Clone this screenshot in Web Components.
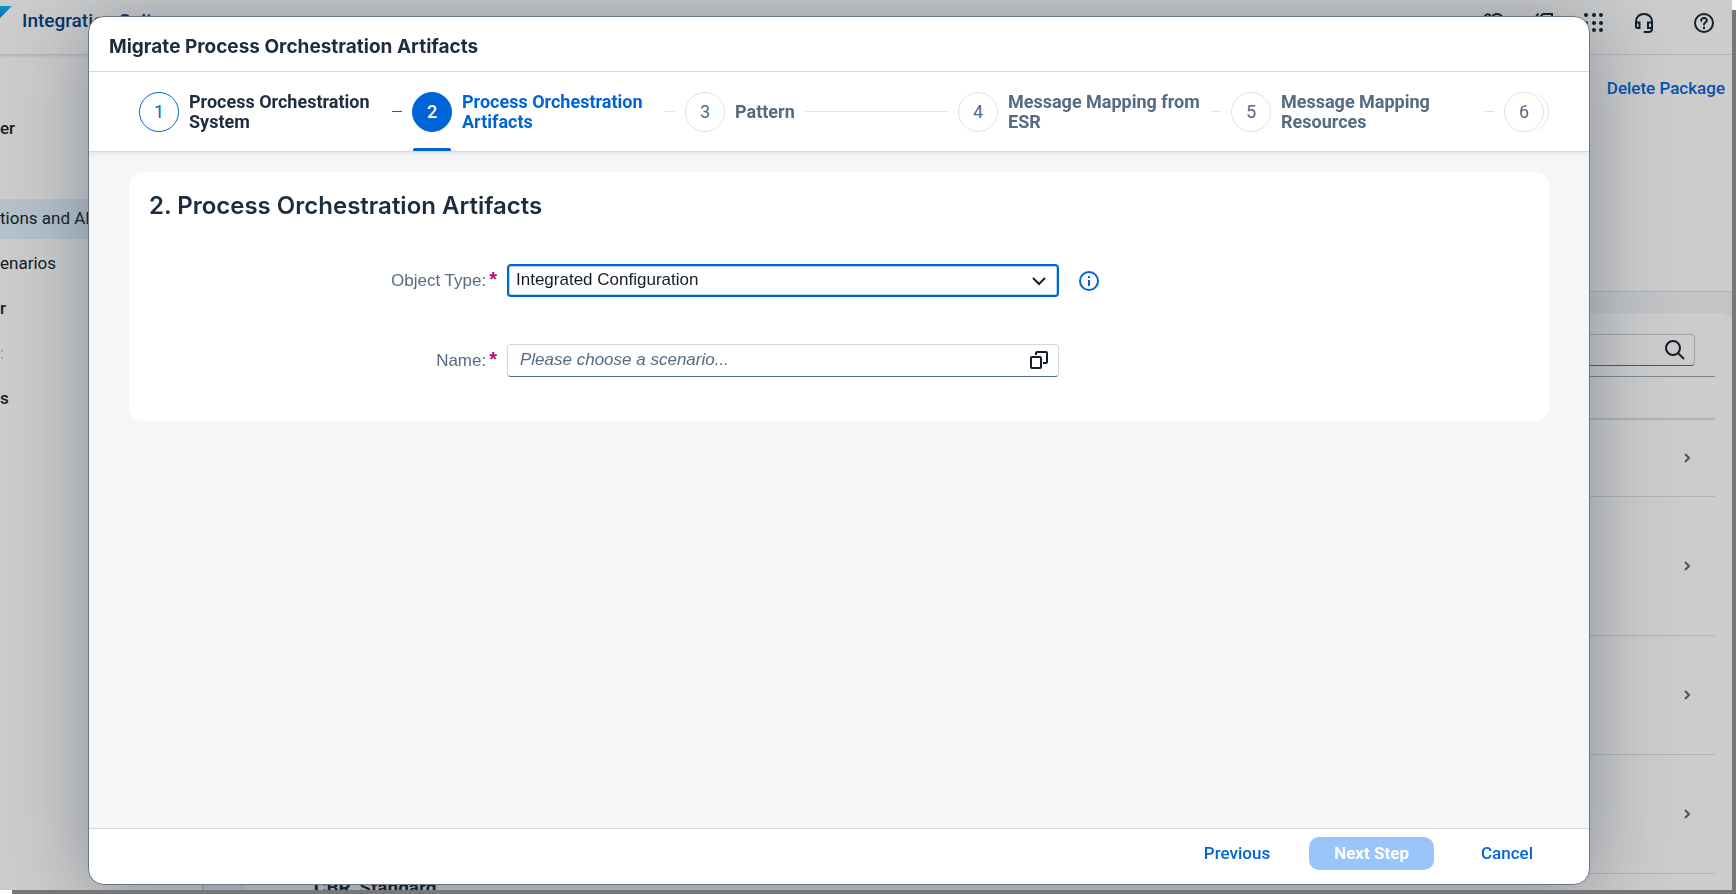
<!DOCTYPE html>
<html lang="en">
<head>
<meta charset="utf-8">
<title>Migrate Process Orchestration Artifacts</title>
<style>
  html, body { margin: 0; height: 100%; }
  body {
    box-sizing: border-box;
    padding: 0 4px 4px 0;
    overflow: hidden;
    background: #fff;
    font: 17px/20px Roboto, "Liberation Sans", sans-serif;
    color: #131e29;
    --accent: #0064d9;
    --ink: #1d2d3e;
    --muted: #556b82;
    --rule: #d9d9d9;
    --heading-font: Inter, "Liberation Sans", sans-serif;
    --field-font: "Liberation Sans", Arial, sans-serif;
  }
</style>
</head>
<body>
<app-frame>
  <shell-header slot="header">Integration Suite</shell-header>
  <side-nav slot="nav"></side-nav>
  <package-page slot="page"></package-page>
  <modal-dialog slot="dialog" label="Migrate Process Orchestration Artifacts">
    <wizard-steps slot="steps">
      <wizard-step number="1" state="done">Process Orchestration<br>System</wizard-step>
      <wizard-step number="2" state="current">Process Orchestration<br>Artifacts</wizard-step>
      <wizard-step number="3" short>Pattern</wizard-step>
      <wizard-step number="4">Message Mapping from<br>ESR</wizard-step>
      <wizard-step number="5">Message Mapping<br>Resources</wizard-step>
      <wizard-step number="6" stacked></wizard-step>
    </wizard-steps>
    <content-card heading="2. Process Orchestration Artifacts">
      <object-type-field></object-type-field>
      <name-field></name-field>
    </content-card>
    <action-button slot="actions">Previous</action-button>
    <action-button slot="actions" primary disabled>Next Step</action-button>
    <action-button slot="actions" last>Cancel</action-button>
  </modal-dialog>
</app-frame>

<script>
  const define = (name, html, setup) => {
    const template = document.createElement('template');
    template.innerHTML = html;
    customElements.define(name, class extends HTMLElement {
      constructor() {
        super();
        this.attachShadow({ mode: 'open' }).append(template.content.cloneNode(true));
      }
      connectedCallback() {
        if (setup) setup(this, this.shadowRoot);
      }
    });
  };

  define('app-frame', `
    <style>
      :host {
        position: relative; box-sizing: border-box; height: 100%;
        display: grid; grid-template: auto 1fr / 204px 1fr;
        background: #ccc; overflow: clip;
      }
      .shade {
        position: fixed; inset: 0 4px 4px 0; pointer-events: none;
        box-shadow: 6px 8px 6px 4px #777;
        clip-path: inset(10px -4px -4px 12px);
      }
      ::slotted([slot=header]) { grid-column: 1 / -1; }
      ::slotted([slot=page]) { min-height: 0; }
      ::slotted([slot=dialog]) { position: absolute; inset: 16px 142px 5px 88px; }
    </style>
    <div class="shade"></div>
    <slot name="header"></slot>
    <slot name="nav"></slot>
    <slot name="page"></slot>
    <slot name="dialog"></slot>
  `);

  define('shell-header', `
    <style>
      :host {
        display: flex; align-items: center; height: 55px; box-sizing: border-box;
        padding: 0 16px 12px 0; gap: 10px; color: #073469;
        border-bottom: 1px solid #b3b5b7; box-shadow: 0 2px 2px #bdbebf;
        font-size: 19px; font-weight: 500; line-height: 24px;
      }
      .logo { width: 12px; height: 32px; }
      .title { flex: 1; }
      nav { display: flex; gap: 26px; padding-top: 4px; }
      button { border: 0; padding: 0; background: none; width: 24px; height: 24px; color: #131e29; }
      button:last-child { margin-left: 10px; }
      svg { display: block; fill: none; stroke: currentColor; stroke-width: 2; stroke-linecap: round; }
    </style>
    <svg class="logo" viewBox="0 0 12 32" aria-hidden="true">
      <defs><linearGradient id="g" x2="0" y2="1"><stop stop-color="#0d96c6"/><stop offset="1" stop-color="#0a66ab"/></linearGradient></defs>
      <path d="M0 1h12L0 13z" fill="url(#g)" stroke="none"/>
    </svg>
    <span class="title"><slot></slot></span>
    <nav aria-label="Tools">
      <button aria-label="Feedback"><svg width="24" height="24"><path d="M3 5c1-2 3-2 5-1M10 6c2-4 8-4 10 0M5 10v9h13"/></svg></button>
      <button aria-label="Notes"><svg width="24" height="24"><path d="M3 7 6 3M9 5l2-2h9v8M8 9v11h9"/></svg></button>
      <button aria-label="Products"><svg width="24" height="24" style="fill:currentColor;stroke:none"><circle cx="4" cy="4" r="2"/><circle cx="12" cy="4" r="2"/><circle cx="19" cy="4" r="2"/><circle cx="4" cy="12" r="2"/><circle cx="12" cy="12" r="2"/><circle cx="19" cy="12" r="2"/><circle cx="4" cy="19" r="2"/><circle cx="12" cy="19" r="2"/><circle cx="19" cy="19" r="2"/></svg></button>
      <button aria-label="Support"><svg width="24" height="24"><path d="M4 15V10.500C4 6 7.500 3 12 3s8 3 8 7.500V17.500Q20 21 16.500 21H12.500M4 11.500H7.500V17H5.500Q4 17 4 15.500zM20 11.500H16V17H20"/></svg></button>
      <button aria-label="Help"><svg width="24" height="24"><circle cx="12" cy="12" r="9"/><path d="M9.200 9.800c0-4 5.800-3.600 5.600-.3C14.700 11.500 12 11.500 12 13.500"/><path d="M12 16.800v.2" stroke-width="2.400"/></svg></button>
    </nav>
  `);

  define('side-nav', `
    <style>
      :host { display: block; border-right: 2px solid #a9adb0; overflow: hidden; }
      ul { list-style: none; margin: 0; padding: 54px 0 0; display: grid; gap: 5px; }
      a { display: flex; align-items: center; box-sizing: border-box; height: 40px; padding-bottom: 2px; color: #131e29; text-decoration: none; }
      .gap { visibility: hidden; }
      .group { font-weight: 500; }
      .faint { color: #93979b; }
      .current { background: #b5c1cb; }
    </style>
    <ul>
      <li><a class="group" href="#">er</a></li>
      <li class="gap"><a href="#"></a></li>
      <li><a class="current" href="#">tions and APIs</a></li>
      <li><a href="#">enarios</a></li>
      <li><a class="group" href="#">r</a></li>
      <li><a class="faint" href="#">:</a></li>
      <li><a class="group" href="#">s</a></li>
    </ul>
  `);

  define('package-page', `
    <style>
      :host { display: flex; flex-direction: column; overflow: hidden; background: #c2c4c6; }
      .hero {
        flex: none; display: flex; justify-content: flex-end; height: 237px; box-sizing: border-box;
        padding: 23px 7px 0 0; background: #ccc; border-bottom: 1px solid #adb0b2; font-weight: 500;
      }
      .hero a { color: #0552ae; text-decoration: none; }
      .panel {
        flex: none; margin: 21px 0 0 40px; padding: 21px 17px 0 20px;
        background: #ccc; border-radius: 12px 12px 0 0;
      }
      .search {
        position: relative; display: flex; width: 400px; box-sizing: border-box;
        margin: 0 20px 10px auto; border: 1px solid #9fa6ad; border-bottom-color: #44566a; border-radius: 4px;
      }
      .search input { flex: 1; height: 30px; border: 0; padding: 0 40px 0 10px; background: none; font: inherit; outline: 0; }
      .search svg { position: absolute; right: 8px; top: 4px; }
      svg { fill: none; stroke: #131e29; stroke-width: 2; }
      ul { list-style: none; margin: 0; padding: 0; border-top: 1px solid #7a8693; }
      li {
        box-sizing: border-box; display: flex; align-items: center; justify-content: flex-end;
        height: 119px; padding: 0 20px 0 50px; border-bottom: 1px solid #b0b2b4;
      }
      li svg { stroke: #44566a; }
      .head { height: 43px; border-bottom-width: 2px; }
      .low { height: 77px; }
      .tall { height: 139px; }
      .named { align-items: flex-start; justify-content: flex-start; padding-top: 4px; font-size: 19px; font-weight: 700; }
    </style>
    <div class="hero"><a href="#">Delete Package</a></div>
    <div class="panel">
      <label class="search"><input type="search" aria-label="Search artifacts">
        <svg width="22" height="22"><circle cx="9" cy="9" r="7"/><path d="m14 14 6 6"/></svg></label>
      <ul>
        <li class="head"></li>
        <li class="low"><svg width="16" height="14"><path d="m6 3 4 4-4 4"/></svg></li>
        <li class="tall"><svg width="16" height="14"><path d="m6 3 4 4-4 4"/></svg></li>
        <li><svg width="16" height="14"><path d="m6 3 4 4-4 4"/></svg></li>
        <li><svg width="16" height="14"><path d="m6 3 4 4-4 4"/></svg></li>
        <li class="named">CBR_Standard</li>
      </ul>
    </div>
  `);

  define('modal-dialog', `
    <style>
      :host {
        display: flex; flex-direction: column; box-sizing: border-box; overflow: hidden;
        border: 1px solid #6b7986; border-radius: 16px; background: #fff;
        box-shadow: 0 8px 80px rgba(34, 53, 72, .4);
      }
      header { padding: 18px 20px 12px; border-bottom: 1px solid var(--rule); }
      h1 { margin: 0; font: 700 19px/24px var(--heading-font); color: var(--ink); }
      main { flex: 1; padding: 20px 40px; background: #f5f6f8; box-shadow: inset 0 4px 4px -2px #e3e5e8; }
      footer {
        display: flex; justify-content: flex-end; gap: 15px;
        padding: 8px 32px 14px; border-top: 1px solid var(--rule);
      }
    </style>
    <header><h1></h1></header>
    <slot name="steps"></slot>
    <main><slot></slot></main>
    <footer><slot name="actions"></slot></footer>
  `, (host, root) => {
    host.setAttribute('role', 'dialog');
    host.setAttribute('aria-label', host.getAttribute('label'));
    root.querySelector('h1').textContent = host.getAttribute('label');
  });

  define('wizard-steps', `
    <style>
      :host { display: flex; height: 79px; padding: 0 40px 0 50px; border-bottom: 1px solid var(--rule); }
    </style>
    <slot></slot>
  `);

  define('wizard-step', `
    <style>
      :host {
        flex: 1; display: flex; align-items: center; gap: 10px; padding-right: 10px;
        --line: #e0e2e4; --text: var(--muted);
      }
      :host([state=done]) { --line: var(--accent); --text: var(--ink); }
      :host([state=current]) { --text: var(--accent); }
      :host([stacked]) { flex: none; padding-right: 5px; }
      .mark { position: relative; flex: none; height: 100%; display: grid; align-items: center; }
      button {
        box-sizing: border-box; width: 40px; height: 40px; padding: 0; border: 1px solid var(--line);
        border-radius: 50%; background: #fff; font: 18px/20px Roboto, sans-serif; color: var(--muted);
      }
      :host([state=done]) button { color: var(--accent); }
      :host([state=current]) button { background: var(--accent); border-color: var(--accent); color: #fff; font-weight: 500; }
      :host([state=current]) .mark::after {
        content: ""; position: absolute; left: 1px; right: 1px; bottom: 0; height: 3px;
        border-radius: 2px 2px 0 0; background: var(--accent);
      }
      :host([stacked]) button { box-shadow: 4px 0 0 #fff, 5px 0 0 var(--line); }
      .label { flex: 1; white-space: nowrap; font-size: 18px; font-weight: 700; color: var(--text); }
      .line { flex: none; width: 10px; height: 1px; background: var(--line); }
      :host([short]) .label { flex: none; }
      :host([short]) .line { flex: 1; }
      :host([stacked]) .label, :host([stacked]) .line { display: none; }
    </style>
    <span class="mark"><button></button></span>
    <span class="label"><slot></slot></span>
    <span class="line"></span>
  `, (host, root) => {
    root.querySelector('button').textContent = host.getAttribute('number');
  });

  define('content-card', `
    <style>
      :host { display: block; padding: 20px 20px 44px; border-radius: 14px; background: #fff; }
      h2 { margin: 0 0 44px; font: 600 24px/28px var(--heading-font); color: var(--ink); }
      .fields { display: grid; gap: 47px; }
    </style>
    <h2></h2>
    <div class="fields"><slot></slot></div>
  `, (host, root) => {
    root.querySelector('h2').textContent = host.getAttribute('heading');
  });

  const fieldStyle = `
      :host { display: grid; grid-template-columns: 87fr 138fr 115fr; gap: 10px; align-items: center; font-family: var(--field-font); }
      label { text-align: right; color: var(--muted); }
      label b { margin-left: 3px; font-size: 20px; line-height: 16px; color: #ba066c; }
      .control { position: relative; display: grid; }
      .control svg { position: absolute; right: 9px; top: 6px; }
      select, input {
        box-sizing: border-box; width: 100%; height: 33px; margin: 0; background: #fff;
        border-radius: 4px; font: inherit; color: #131e29; outline: 0; appearance: none;
      }
      svg { fill: none; stroke: #131e29; stroke-width: 2; }`;

  define('object-type-field', `
    <style>${fieldStyle}
      select { padding: 0 40px 2px 7px; border: 2px solid var(--accent); box-shadow: inset 0 0 0 1px #b9d6f7; }
      .control svg { pointer-events: none; }
      .info { justify-self: start; margin-left: 9px; padding: 0; border: 0; background: none; }
      .info svg { display: block; stroke: var(--accent); }
    </style>
    <label for="type">Object Type:<b>*</b></label>
    <div class="control">
      <select id="type"><option>Integrated Configuration</option></select>
      <svg width="22" height="22"><path d="m5 8 6 6 6-6"/></svg>
    </div>
    <button class="info" aria-label="Information"><svg width="22" height="22"><circle cx="11" cy="11" r="9"/><path d="M11 6v2M11 10v6"/></svg></button>
  `);

  define('name-field', `
    <style>${fieldStyle}
      input { padding: 0 40px 2px 12px; border: 1px solid #d0d6dc; border-bottom-color: var(--muted); }
      input::placeholder { color: var(--muted); font-style: italic; opacity: 1; }
      .help { position: absolute; right: 9px; top: 5px; width: 22px; height: 22px; padding: 0; border: 0; background: none; }
      .help svg { position: static; display: block; }
    </style>
    <label for="name">Name:<b>*</b></label>
    <div class="control">
      <input id="name" type="text" placeholder="Please choose a scenario...">
      <button class="help" aria-label="Choose a scenario"><svg width="22" height="22"><rect x="3" y="8" width="10" height="11" rx="1"/><path d="M8 6V4q0-1 1-1h9q1 0 1 1v9q0 1-1 1h-3"/></svg></button>
    </div>
  `);

  define('action-button', `
    <style>
      :host { display: block; }
      :host([last]) { margin-left: 8px; }
      button {
        height: 33px; padding: 0 24px 2px; border: 0; border-radius: 10px; background: none;
        font: 500 17px/20px Roboto, sans-serif; color: var(--accent);
      }
      :host([primary]) button { background: #99c5fb; color: #fff; font-weight: 700; padding: 0 25px 2px; }
    </style>
    <button><slot></slot></button>
  `, (host, root) => {
    root.querySelector('button').disabled = host.hasAttribute('disabled');
  });
</script>
</body>
</html>
